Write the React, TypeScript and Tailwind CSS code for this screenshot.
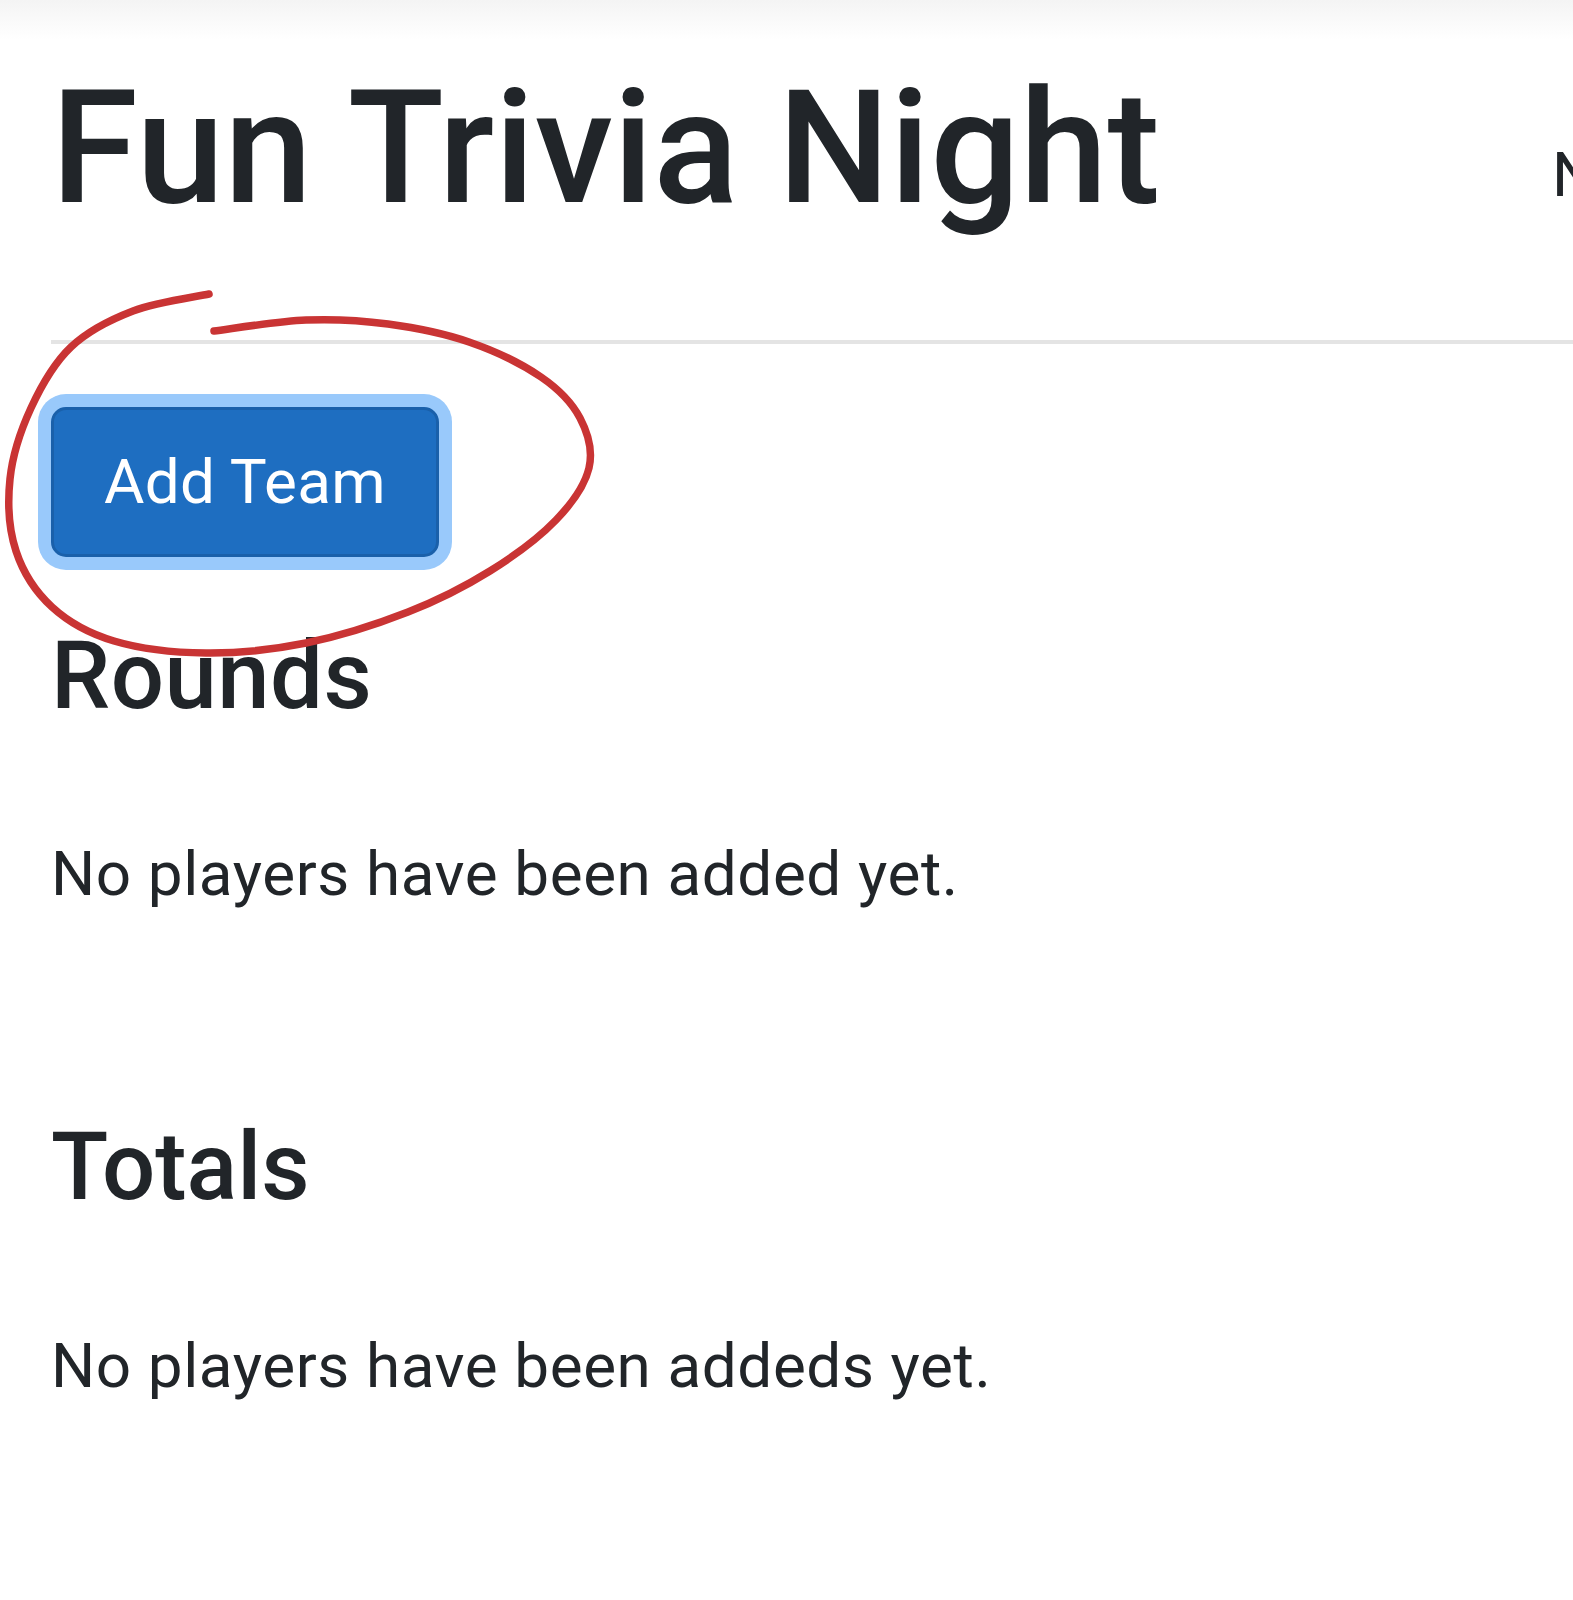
import React from 'react';

// points of the hand-drawn red loop around the "Add Team" button
const loop: [number, number][] = [
  [209, 294], [133, 311], [71, 347], [31, 408], [10, 479], [16, 551], [52, 607],
  [114, 641], [206, 653], [306, 643], [408, 612], [490, 571], [556, 520], [589, 468],
  [580, 418], [541, 377], [469, 342], [388, 324], [306, 320], [214, 331],
];

function smoothPath(pts: [number, number][]) {
  let d = `M ${pts[0][0]} ${pts[0][1]}`;
  for (let i = 0; i < pts.length - 1; i++) {
    const p0 = pts[i - 1] || pts[i];
    const p1 = pts[i];
    const p2 = pts[i + 1];
    const p3 = pts[i + 2] || p2;
    const c1x = p1[0] + (p2[0] - p0[0]) / 6;
    const c1y = p1[1] + (p2[1] - p0[1]) / 6;
    const c2x = p2[0] - (p3[0] - p1[0]) / 6;
    const c2y = p2[1] - (p3[1] - p1[1]) / 6;
    d += ` C ${c1x} ${c1y} ${c2x} ${c2y} ${p2[0]} ${p2[1]}`;
  }
  return d;
}

function Scribble() {
  return (
    <svg
      className="pointer-events-none absolute left-0 top-0"
      width="620"
      height="680"
      viewBox="0 0 620 680"
      fill="none"
    >
      <path d={smoothPath(loop)} stroke="#c93434" strokeWidth="7.5" strokeLinecap="round" strokeLinejoin="round" />
    </svg>
  );
}

export default function App() {
  const font = { fontFamily: 'Roboto, "Liberation Sans", sans-serif' };

  return (
    <div className="relative w-[1573px] min-h-[1600px] overflow-hidden bg-white text-[#212529]" style={font}>
      {/* top fade */}
      <div className="h-[40px] bg-gradient-to-b from-[#f4f4f4] to-white" />

      <div className="pl-[51px] pt-[14px]">
        {/* Header row */}
        <div className="grid grid-cols-[1501px_auto] items-end">
          <h1 className="text-[158px] font-medium leading-[1.2] whitespace-nowrap">Fun Trivia Night</h1>
          <span className="mb-[23px] text-[62px] leading-[1.5] whitespace-nowrap">New Game</span>
        </div>

        <div className="mt-[96px] h-[4px] bg-[#e4e4e4]" />

        {/* Add Team */}
        <div className="mt-[63px]">
          <button className="flex h-[150px] w-[388px] items-center justify-center rounded-[15px] border-[3px] border-[#1a60aa] bg-[#1e6ec1] text-[62px] leading-none tracking-[0.3px] text-white shadow-[0_0_0_13px_#99c9fb]">
            Add Team
          </button>
        </div>

        <h4 className="mt-[63px] text-[94px] font-medium leading-[1.2] tracking-[0.5px]">Rounds</h4>
        <p className="mt-[95px] text-[62px] leading-[1.5] tracking-[0.6px]">No players have been added yet.</p>

        <h4 className="mt-[191px] text-[94px] font-medium leading-[1.2]">Totals</h4>
        <p className="mt-[95px] text-[62px] leading-[1.5] tracking-[0.6px]">No players have been addeds yet.</p>
      </div>

      <Scribble />
    </div>
  );
}
